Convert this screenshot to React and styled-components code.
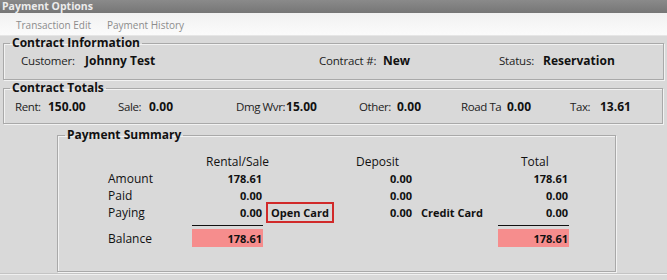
import React from 'react';
import styled, { createGlobalStyle } from 'styled-components';

const GlobalStyle = createGlobalStyle`
  html, body {
    margin: 0;
    padding: 0;
    background: #d9d9d9;
  }
  body {
    font-family: 'Open Sans', 'Noto Sans', sans-serif;
    color: #111;
  }
`;

const Window = styled.div`
  width: 667px;
  height: 280px;
  display: flex;
  flex-direction: column;
  background: #d9d9d9;
  overflow: hidden;
`;

const TitleBar = styled.div`
  height: 13px;
  background: linear-gradient(#8a8a8a, #767676);
  color: #ececec;
  font-size: 10.5px;
  font-weight: 700;
  line-height: 13px;
  padding-left: 2px;
`;

const MenuBar = styled.div`
  height: 23px;
  display: flex;
  align-items: center;
  gap: 16px;
  padding-left: 16px;
  padding-top: 1px;
  box-sizing: border-box;
  background: linear-gradient(#f1f1f1, #fbfbfb);
  border-bottom: 1px solid #e6e6e6;
`;

const MenuItem = styled.span`
  font-size: 10px;
  color: #8c8c8c;
`;

const Group = styled.fieldset`
  margin: ${(p) => p.$top || 0}px 0 0 ${(p) => p.$left || 3}px;
  width: ${(p) => p.$width}px;
  box-sizing: border-box;
  padding: ${(p) => p.$pad};
  border: 1px solid #a9a9a9;
  box-shadow: inset 1px 1px 0 #f2f2f2, 1px 1px 0 #f2f2f2;
  min-width: 0;
`;

const Legend = styled.legend`
  font-size: 12px;
  font-weight: 700;
  line-height: 14px;
  padding: 0 2px;
  margin-left: ${(p) => p.$indent || 0}px;
`;

const FieldRow = styled.div`
  display: flex;
  height: 16px;
  align-items: center;
  font-size: 11.5px;
  letter-spacing: ${(p) => (p.$tight ? '-0.4px' : '-0.2px')};
`;

const Field = styled.div`
  display: flex;
  align-items: center;
  width: ${(p) => (p.$width ? `${p.$width}px` : 'auto')};
  flex: ${(p) => (p.$width ? 'none' : '1')};
  white-space: nowrap;
`;

const FieldLabel = styled.span`
  min-width: ${(p) => p.$width}px;
  padding-right: 1px;
  flex-shrink: 0;
  color: #222;
`;

const FieldValue = styled.span`
  font-weight: 700;
  font-size: 12px;
  letter-spacing: 0;
`;

const Summary = styled.div`
  display: grid;
  grid-template-columns: 50px 84px 71px 78px 72px 85px 71px;
  grid-template-rows: 18px 17px 16px 18px 8px 18px;
  font-size: 12px;
`;

const Head = styled.div`
  grid-column: ${(p) => p.$col};
  padding-left: ${(p) => p.$indent}px;
  align-self: center;
  white-space: nowrap;
`;

const RowLabel = styled.div`
  grid-column: 2;
  align-self: center;
`;

const Num = styled.div`
  grid-column: ${(p) => p.$col};
  align-self: ${(p) => (p.$fill ? 'stretch' : 'center')};
  display: flex;
  align-items: center;
  justify-content: flex-end;
  padding-right: 1px;
  font-size: 11px;
  font-weight: 700;
  background: ${(p) => (p.$fill ? '#f68d8d' : 'transparent')};
`;

const Rule = styled.div`
  grid-column: ${(p) => p.$col};
  align-self: center;
  height: 1px;
  background: #111;
`;

const CardButton = styled.div`
  grid-column: 4;
  align-self: center;
  justify-self: start;
  margin-left: 3px;
  height: 17px;
  padding: 0 3px;
  display: flex;
  align-items: center;
  border: 2px solid #d12a2a;
  font-size: 11px;
  font-weight: 700;
  white-space: nowrap;
`;

const Method = styled.div`
  grid-column: 6;
  align-self: center;
  padding-left: 8px;
  font-size: 11px;
  font-weight: 700;
  white-space: nowrap;
`;

const BottomEdge = styled.div`
  margin-top: 1px;
  border-top: 1px solid #c4c4c4;
  border-bottom: 1px solid #f0f0f0;
`;

const totals = [
  { label: 'Rent:', value: '150.00', cell: 103, lw: 32 },
  { label: 'Sale:', value: '0.00', cell: 118, lw: 30 },
  { label: 'Dmg Wvr:', value: '15.00', cell: 123, lw: 44 },
  { label: 'Other:', value: '0.00', cell: 102, lw: 37 },
  { label: 'Road Ta', value: '0.00', cell: 109, lw: 45 },
  { label: 'Tax:', value: '13.61', lw: 29 },
];

const rows = [
  { label: 'Amount', rental: '178.61', deposit: '0.00', total: '178.61' },
  { label: 'Paid', rental: '0.00', deposit: '0.00', total: '0.00' },
  { label: 'Paying', rental: '0.00', deposit: '0.00', total: '0.00', paying: true },
];

const App = () => {
  return (
    <Window>
      <GlobalStyle />
      <TitleBar>Payment Options</TitleBar>
      <MenuBar>
        <MenuItem>Transaction Edit</MenuItem>
        <MenuItem>Payment History</MenuItem>
      </MenuBar>

      <Group $top={0} $width={661} $pad="2px 0 11px 17px">
        <Legend $indent={-11}>Contract Information</Legend>
        <FieldRow>
          <Field $width={298}>
            <FieldLabel $width={63}>Customer:</FieldLabel>
            <FieldValue>Johnny Test</FieldValue>
          </Field>
          <Field $width={180}>
            <FieldLabel $width={63}>Contract #:</FieldLabel>
            <FieldValue>New</FieldValue>
          </Field>
          <Field>
            <FieldLabel $width={43}>Status:</FieldLabel>
            <FieldValue>Reservation</FieldValue>
          </Field>
        </FieldRow>
      </Group>

      <Group $top={1} $width={660} $pad="3px 0 9px 11px">
        <Legend $indent={-5}>Contract Totals</Legend>
        <FieldRow $tight>
          {totals.map((t) => (
            <Field key={t.label} $width={t.cell}>
              <FieldLabel $width={t.lw}>{t.label}</FieldLabel>
              <FieldValue>{t.value}</FieldValue>
            </Field>
          ))}
        </FieldRow>
      </Group>

      <Group $top={4} $left={57} $width={559} $pad="10px 0 24px 0">
        <Legend $indent={7}>Payment Summary</Legend>
        <Summary>
          <Head $col={3} $indent={14}>Rental/Sale</Head>
          <Head $col={5} $indent={15}>Deposit</Head>
          <Head $col={7} $indent={23}>Total</Head>
          {rows.map((r) => (
            <React.Fragment key={r.label}>
              <RowLabel>{r.label}</RowLabel>
              <Num $col={3}>{r.rental}</Num>
              {r.paying && <CardButton>Open Card</CardButton>}
              <Num $col={5}>{r.deposit}</Num>
              {r.paying && <Method>Credit Card</Method>}
              <Num $col={7}>{r.total}</Num>
            </React.Fragment>
          ))}
          <Rule $col={3} />
          <Rule $col={7} />
          <RowLabel>Balance</RowLabel>
          <Num $col={3} $fill>178.61</Num>
          <Num $col={7} $fill>178.61</Num>
        </Summary>
      </Group>
      <BottomEdge />
    </Window>
  );
};

export default App;
